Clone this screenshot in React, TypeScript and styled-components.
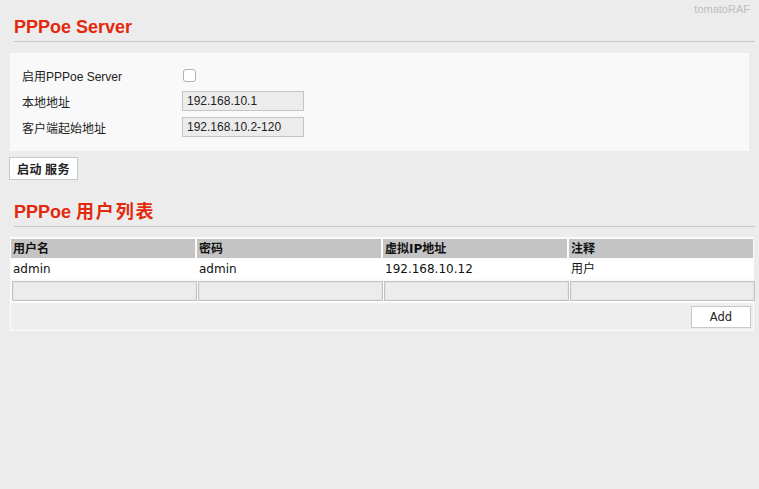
import React from "react";
import styled, { createGlobalStyle } from "styled-components";

const Global = createGlobalStyle`
  html, body { margin: 0; padding: 0; background: #ececec; }
  body { font-family: "Liberation Sans", Arial, "Noto Sans CJK SC", sans-serif; color: #222; }
  * { box-sizing: border-box; }
`;

const Page = styled.div`
  width: 759px;
  min-height: 489px;
  background: #ececec;
`;

const Brand = styled.div`
  text-align: right;
  font-size: 11px;
  line-height: 12px;
  color: #bdbdbd;
  padding: 3px 9px 0 0;
  height: 14px;
`;

const Title = styled.h2<{ $top: number }>`
  margin: ${(p) => p.$top}px 4px 0 14px;
  padding: 0 0 3px 0;
  font-family: "Liberation Sans", Arial, "Noto Sans CJK SC", sans-serif;
  font-size: 18px;
  line-height: 22px;
  font-weight: bold;
  color: #e3290c;
  border-bottom: 1px solid #c8c8c8;
`;

const CjkPart = styled.span`
  letter-spacing: 1.8px;
`;

const Panel = styled.div`
  margin: 11px 10px 0 10px;
  background: #f9f9f9;
  padding: 9px 12px 11px 12px;
  display: grid;
  grid-template-columns: 160px 1fr;
  grid-auto-rows: 26px;
  align-items: center;
`;

const Label = styled.div`
  font-size: 12px;
  color: #222;
`;

const Check = styled.input`
  appearance: none;
  -webkit-appearance: none;
  display: block;
  width: 13px;
  height: 13px;
  margin: 0 0 0 1px;
  border: 1px solid #b8b0a2;
  border-radius: 3px;
  background: #fff;
`;

const Field = styled.input`
  display: block;
  width: 122px;
  height: 20px;
  border: 1px solid #c4c4c4;
  background: #ececec;
  padding: 0 4px;
  font-family: "Liberation Sans", Arial, sans-serif;
  font-size: 12px;
  color: #222;
  outline: none;
`;

const Button = styled.button<{ $w: number; $h: number }>`
  width: ${(p) => p.$w}px;
  height: ${(p) => p.$h}px;
  background: #fff;
  border: 1px solid #c8c8c8;
  border-radius: 0;
  padding: 0;
  font-size: 12px;
  color: #222;
  cursor: pointer;
`;

const ServiceButton = styled(Button)`
  margin: 6px 0 0 9px;
  display: block;
  font-weight: bold;
  font-family: "Noto Sans CJK SC", sans-serif;
  letter-spacing: 0.5px;
`;

const Table = styled.div`
  margin: 10px 5px 0 10px;
  border: 1px solid #fbfbfb;
  background: #eeeeee;
  font-family: "DejaVu Sans", "Noto Sans CJK SC", sans-serif;
`;

const Row = styled.div<{ $bg: string; $h: number }>`
  display: grid;
  grid-template-columns: repeat(4, 1fr);
  column-gap: 2px;
  background: ${(p) => p.$bg};
  height: ${(p) => p.$h}px;
  align-items: center;
  border-top: 1px solid #fbfbfb;
`;

const HeadCell = styled.div`
  background: #c4c4c4;
  height: 100%;
  display: flex;
  align-items: center;
  padding-left: 2px;
  font-size: 12px;
  line-height: 14px;
  font-weight: bold;
  color: #111;
`;

const Cell = styled.div`
  background: #fff;
  height: 100%;
  display: flex;
  align-items: center;
  padding-left: 2px;
  font-size: 12px;
  line-height: 14px;
  color: #111;
`;

const InputCell = styled.div`
  padding: 0;
`;

const RowInput = styled.input`
  display: block;
  width: calc(100% + 1px);
  height: 20px;
  margin: 0 0 0 1px;
  border: 1px solid #c2c2c2;
  box-shadow: inset 0 0 0 1px #e4e4e4;
  background: #ececec;
  outline: none;
  padding: 0 4px;
  font-size: 12px;
`;

const Footer = styled.div`
  display: flex;
  justify-content: flex-end;
  align-items: center;
  height: 28px;
  padding-right: 2px;
  border-top: 1px solid #fbfbfb;
`;

const AddButton = styled(Button)`
  font-family: "DejaVu Sans", sans-serif;
  font-size: 11.5px;
`;

export default function App() {
  return (
    <Page>
      <Global />
      <Brand>tomatoRAF</Brand>
      <Title $top={2}>PPPoe Server</Title>
      <Panel>
        <Label>启用PPPoe Server</Label>
        <div>
          <Check type="checkbox" />
        </div>
        <Label>本地地址</Label>
        <div>
          <Field defaultValue="192.168.10.1" />
        </div>
        <Label>客户端起始地址</Label>
        <div>
          <Field defaultValue="192.168.10.2-120" />
        </div>
      </Panel>
      <ServiceButton $w={69} $h={23}>启动 服务</ServiceButton>
      <Title $top={21}>
        PPPoe <CjkPart>用户列表</CjkPart>
      </Title>
      <Table>
        <Row $bg="#fbfbfb" $h={20}>
          <HeadCell>用户名</HeadCell>
          <HeadCell>密码</HeadCell>
          <HeadCell>虚拟IP地址</HeadCell>
          <HeadCell>注释</HeadCell>
        </Row>
        <Row $bg="#fff" $h={21}>
          <Cell>admin</Cell>
          <Cell>admin</Cell>
          <Cell>192.168.10.12</Cell>
          <Cell>用户</Cell>
        </Row>
        <Row $bg="#fbfbfb" $h={23}>
          <InputCell>
            <RowInput autoFocus />
          </InputCell>
          <InputCell>
            <RowInput />
          </InputCell>
          <InputCell>
            <RowInput />
          </InputCell>
          <InputCell>
            <RowInput />
          </InputCell>
        </Row>
        <Footer>
          <AddButton $w={60} $h={22}>Add</AddButton>
        </Footer>
      </Table>
    </Page>
  );
}
